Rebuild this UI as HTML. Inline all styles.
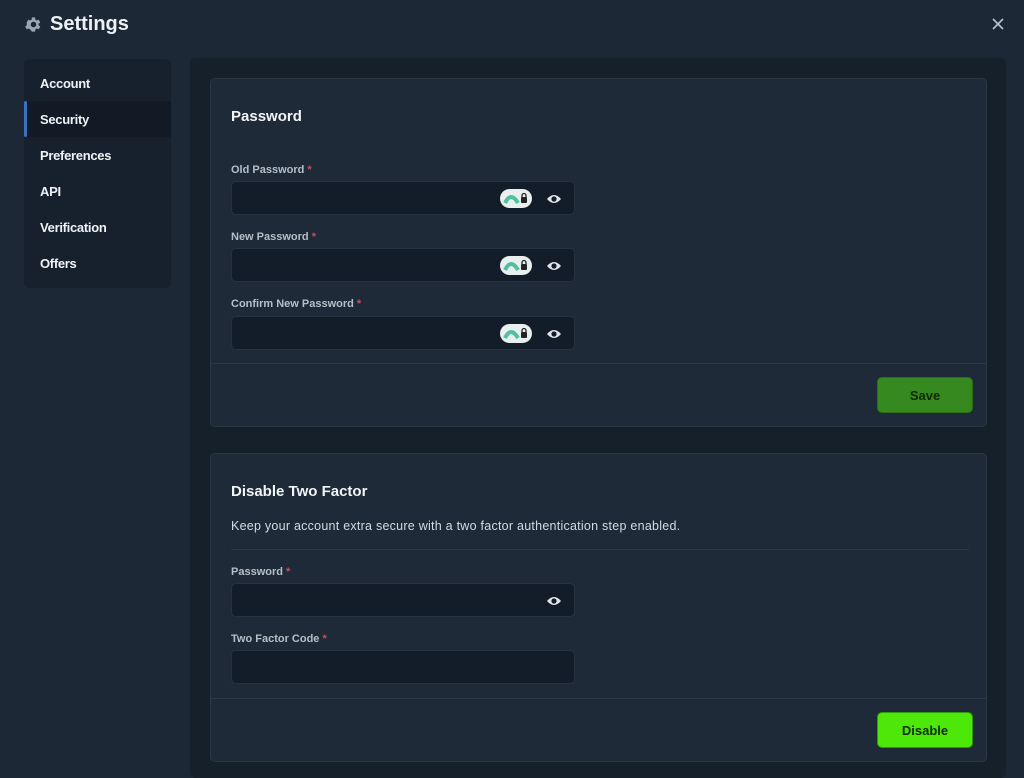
<!DOCTYPE html>
<html><head><meta charset="utf-8"><style>
*{margin:0;padding:0;box-sizing:border-box}
body{width:1024px;height:770px;background:#1c2835;font-family:"Liberation Sans",sans-serif;position:relative;overflow:hidden;color:#fff}
.a{position:absolute}
.title{left:50px;top:13px;font-size:20px;font-weight:bold;color:#eef1f4}
.side{left:24px;top:59px;width:147px;height:229px;background:#17212d;border-radius:6px}
.nav{position:absolute;left:16px;font-size:13px;font-weight:bold;color:#f0f3f6;letter-spacing:-0.3px}
.sel{left:24px;top:101px;width:147px;height:36px;background:#111a25}
.selbar{left:24px;top:101px;width:3px;height:36px;background:#3f6fc0;border-radius:2px}
.panel{left:190px;top:58px;width:816px;height:720px;background:#16202b;border-radius:6px}
.card{left:210px;width:777px;background:#1e2a37;border:1px solid #2a3744;border-radius:5px}
.h{font-size:15px;font-weight:bold;color:#f2f4f6;left:231px}
.lbl{left:231px;font-size:11px;font-weight:bold;color:#b7bfc8}
.lbl b{color:#d04a5a;font-weight:bold}
.inp{left:231px;width:344px;height:34px;background:#131d29;border:1px solid #253240;border-radius:5px}
.pill{position:absolute;left:268px;top:7px;width:32px;height:19px;background:#e9eeee;border-radius:10px}
.eye{position:absolute;left:314px;top:11px}
.line{background:#2b3845;height:1px}
.btn{left:877px;width:96px;height:36px;border-radius:5px;font-size:13px;font-weight:bold;text-align:center;line-height:36px;color:#0e2a08}
</style></head><body>
<svg class="a" style="left:24px;top:15px" width="19" height="19" viewBox="0 0 24 24"><path fill="#9aa6b4" d="M19.4 13a7.5 7.5 0 0 0 0-2l2.1-1.6-2-3.5-2.5 1a7 7 0 0 0-1.7-1L15 3h-4l-.4 2.9a7 7 0 0 0-1.7 1l-2.5-1-2 3.5L4.6 11a7.5 7.5 0 0 0 0 2l-2.1 1.6 2 3.5 2.5-1a7 7 0 0 0 1.7 1L11 21h4l.4-2.9a7 7 0 0 0 1.7-1l2.5 1 2-3.5zM13 15.5a3.5 3.5 0 1 1 0-7 3.5 3.5 0 0 1 0 7z" transform="translate(-1 0)"/></svg>
<div class="a title">Settings</div>
<svg class="a" style="left:992px;top:18px" width="12" height="12" viewBox="0 0 12 12"><path d="M1 1L11 11M11 1L1 11" stroke="#b9c3ce" stroke-width="1.6"/></svg>
<div class="a side"></div>
<div class="a sel"></div><div class="a selbar"></div>
<div class="a" style="left:24px;top:59px;width:147px">
<div class="nav" style="top:17px">Account</div>
<div class="nav" style="top:53px">Security</div>
<div class="nav" style="top:89px">Preferences</div>
<div class="nav" style="top:125px">API</div>
<div class="nav" style="top:161px">Verification</div>
<div class="nav" style="top:197px">Offers</div>
</div>
<div class="a panel"></div>
<div class="a card" style="top:78px;height:349px"></div>
<div class="a h" style="top:108px">Password</div>
<div class="a lbl" style="top:164px">Old Password <b>*</b></div>
<div class="a inp" style="top:181px"><div class="pill"><svg width="32" height="19"><path d="M5 14 Q11 2 18 14" stroke="#4fbf9f" stroke-width="4" fill="none"/><rect x="21" y="8" width="6" height="6" rx="1" fill="#222"/><path d="M22 8V6.5a2 2 0 0 1 4 0V8" stroke="#222" fill="none" stroke-width="1.3"/></svg></div><svg class="eye" width="16" height="12" viewBox="0 0 16 12"><path d="M1 6Q8-2 15 6Q8 14 1 6z" fill="#dfe5ea"/><circle cx="8" cy="6" r="2.6" fill="#131d29"/></svg></div>
<div class="a lbl" style="top:231px">New Password <b>*</b></div>
<div class="a inp" style="top:248px"><div class="pill"><svg width="32" height="19"><path d="M5 14 Q11 2 18 14" stroke="#4fbf9f" stroke-width="4" fill="none"/><rect x="21" y="8" width="6" height="6" rx="1" fill="#222"/><path d="M22 8V6.5a2 2 0 0 1 4 0V8" stroke="#222" fill="none" stroke-width="1.3"/></svg></div><svg class="eye" width="16" height="12" viewBox="0 0 16 12"><path d="M1 6Q8-2 15 6Q8 14 1 6z" fill="#dfe5ea"/><circle cx="8" cy="6" r="2.6" fill="#131d29"/></svg></div>
<div class="a lbl" style="top:298px">Confirm New Password <b>*</b></div>
<div class="a inp" style="top:316px"><div class="pill"><svg width="32" height="19"><path d="M5 14 Q11 2 18 14" stroke="#4fbf9f" stroke-width="4" fill="none"/><rect x="21" y="8" width="6" height="6" rx="1" fill="#222"/><path d="M22 8V6.5a2 2 0 0 1 4 0V8" stroke="#222" fill="none" stroke-width="1.3"/></svg></div><svg class="eye" width="16" height="12" viewBox="0 0 16 12"><path d="M1 6Q8-2 15 6Q8 14 1 6z" fill="#dfe5ea"/><circle cx="8" cy="6" r="2.6" fill="#131d29"/></svg></div>
<div class="a line" style="left:211px;width:775px;top:363px"></div>
<div class="a btn" style="top:377px;background:#36891f;border:1px solid #2b6e18">Save</div>

<div class="a card" style="top:453px;height:309px"></div>
<div class="a h" style="top:483px">Disable Two Factor</div>
<div class="a" style="left:231px;top:519px;font-size:12.5px;letter-spacing:0.25px;color:#d4dae0">Keep your account extra secure with a two factor authentication step enabled.</div>
<div class="a line" style="left:231px;width:738px;top:549px"></div>
<div class="a lbl" style="top:566px">Password <b>*</b></div>
<div class="a inp" style="top:583px"><svg class="eye" width="16" height="12" viewBox="0 0 16 12"><path d="M1 6Q8-2 15 6Q8 14 1 6z" fill="#dfe5ea"/><circle cx="8" cy="6" r="2.6" fill="#131d29"/></svg></div>
<div class="a lbl" style="top:633px">Two Factor Code <b>*</b></div>
<div class="a inp" style="top:650px"></div>
<div class="a line" style="left:211px;width:775px;top:698px"></div>
<div class="a btn" style="top:712px;background:#4de80a;border:1px solid #2e9a05">Disable</div>
</body></html>
